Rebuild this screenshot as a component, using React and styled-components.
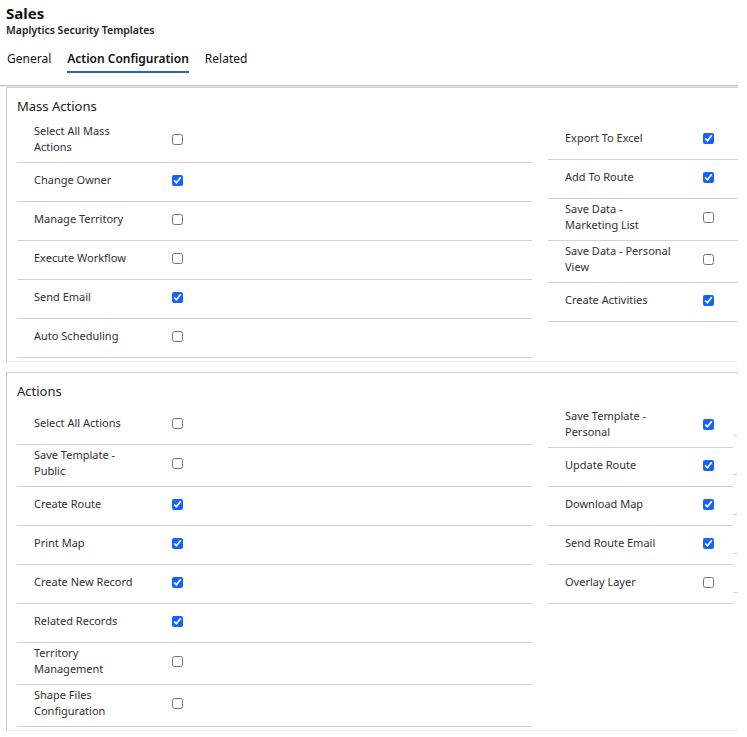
import React from "react";
import styled, { createGlobalStyle } from "styled-components";

const Global = createGlobalStyle`
  html, body { margin: 0; padding: 0; background: #fff; }
  body { font-family: "Noto Sans", "Open Sans", sans-serif; color: #323130; }
  * { box-sizing: border-box; }
`;

const Page = styled.div`
  width: 747px;
  height: 737px;
  overflow: hidden;
  padding-right: 9px;
`;

const Header = styled.header`
  padding: 3px 0 12px 6px;
  border-bottom: 1px solid #bdbdbd;
`;

const Title = styled.h1`
  margin: 0;
  font-size: 15px;
  line-height: 20px;
  font-weight: 700;
  color: #111;
`;

const Subtitle = styled.div`
  font-size: 10.5px;
  line-height: 14px;
  font-weight: 600;
  color: #222;
`;

const TabBar = styled.nav`
  display: flex;
  gap: 16px;
  margin-top: 13px;
  padding-left: 1px;
`;

const Tab = styled.div`
  font-size: 12px;
  line-height: 18px;
  padding-bottom: 3px;
  font-weight: ${(p) => (p.$active ? 600 : 400)};
  color: #111;
  border-bottom: 2px solid ${(p) => (p.$active ? "#2b5fd9" : "transparent")};
`;

const Body = styled.main`
  padding: 1px 0 0 6px;
  background: linear-gradient(#ececec, #ececec) top left / 100% 1px no-repeat;
`;

const Section = styled.section`
  border-top: 1px solid #cfcfcf;
  border-left: 1px solid #c6c6c6;
  border-bottom: 1px solid #ededed;
  padding: 9px 0 3px 10px;
  margin-top: ${(p) => p.$gap || 0}px;
`;

const SectionTitle = styled.h2`
  margin: 0 0 6px;
  font-size: 13px;
  line-height: 18px;
  font-weight: 400;
  color: #222;
`;

const Columns = styled.div`
  display: flex;
  align-items: flex-start;
`;

const Column = styled.div`
  width: ${(p) => p.$width}px;
  margin-left: ${(p) => p.$offset || 0}px;
  display: flex;
  flex-direction: column;
`;

const Row = styled.div`
  display: flex;
  align-items: center;
  min-height: 39px;
  padding: 2px 0 7px 17px;
  border-bottom: 1px solid #d2d2d2;
`;

const Label = styled.span`
  width: 108px;
  font-size: 11px;
  line-height: 16px;
  color: #323130;
`;

const Check = styled.input.attrs({ type: "checkbox" })`
  width: 11px;
  height: 11px;
  margin: 1px 0 0 30px;
  accent-color: #1463ff;
`;

const StubCol = styled.div`
  width: 4px;
  display: flex;
  flex-direction: column;
`;

const Stub = styled.div`
  height: ${(p) => p.$h}px;
  border-bottom: 1px solid #d6d6d6;
`;

const massLeft = [
  ["Select All Mass Actions", false],
  ["Change Owner", true],
  ["Manage Territory", false],
  ["Execute Workflow", false],
  ["Send Email", true],
  ["Auto Scheduling", false],
];
const massRight = [
  ["Export To Excel", true],
  ["Add To Route", true],
  ["Save Data - Marketing List", false],
  ["Save Data - Personal View", false],
  ["Create Activities", true],
];
const actLeft = [
  ["Select All Actions", false],
  ["Save Template - Public", false],
  ["Create Route", true],
  ["Print Map", true],
  ["Create New Record", true],
  ["Related Records", true],
  ["Territory Management", false],
  ["Shape Files Configuration", false],
];
const actRight = [
  ["Save Template - Personal", true],
  ["Update Route", true],
  ["Download Map", true],
  ["Send Route Email", true],
  ["Overlay Layer", false],
];

function Field({ label, checked }) {
  return (
    <Row>
      <Label>{label}</Label>
      <Check defaultChecked={checked} />
    </Row>
  );
}

function List({ items }) {
  return items.map(([l, c]) => <Field key={l} label={l} checked={c} />);
}

export default function App() {
  return (
    <Page>
      <Global />
      <Header>
        <Title>Sales</Title>
        <Subtitle>Maplytics Security Templates</Subtitle>
        <TabBar>
          <Tab>General</Tab>
          <Tab $active>Action Configuration</Tab>
          <Tab>Related</Tab>
        </TabBar>
      </Header>
      <Body>
        <Section>
          <SectionTitle>Mass Actions</SectionTitle>
          <Columns>
            <Column $width={515}>
              <List items={massLeft} />
            </Column>
            <Column $width={190} $offset={16}>
              <List items={massRight} />
            </Column>
          </Columns>
        </Section>
        <Section $gap={10}>
          <SectionTitle>Actions</SectionTitle>
          <Columns>
            <Column $width={515}>
              <List items={actLeft} />
            </Column>
            <Column $width={185} $offset={16}>
              <List items={actRight} />
            </Column>
            <StubCol>
              <Stub $h={30} />
              <Stub $h={39} />
              <Stub $h={40} />
              <Stub $h={39} />
              <Stub $h={39} />
            </StubCol>
          </Columns>
        </Section>
      </Body>
    </Page>
  );
}
